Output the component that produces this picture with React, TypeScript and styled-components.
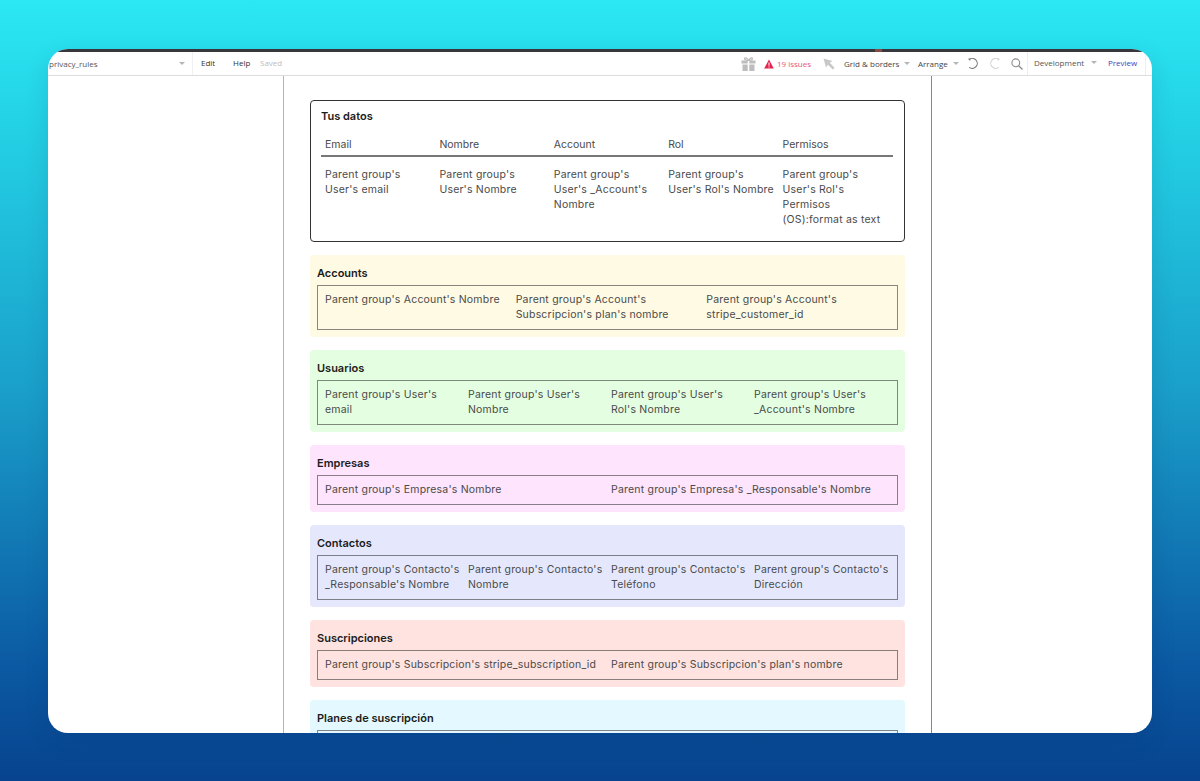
import { FC } from "react";
import styled, { createGlobalStyle } from "styled-components";

const GlobalStyle = createGlobalStyle`
  html, body {
    margin: 0;
    height: 781px;
    overflow: hidden;
    background: linear-gradient(180deg, #2be8f3 0%, #24d3e6 15%, #1a9fca 50%, #0b5aa3 85%, #07438e 100%);
  }
  * {
    box-sizing: border-box;
  }
`;

const tusDatos = [
  { label: "Email", value: "Parent group's User's email" },
  { label: "Nombre", value: "Parent group's User's Nombre" },
  { label: "Account", value: "Parent group's User's _Account's Nombre" },
  { label: "Rol", value: "Parent group's User's Rol's Nombre" },
  { label: "Permisos", value: "Parent group's User's Rol's Permisos (OS):format as text" },
];

const sections = [
  {
    title: "Accounts",
    bg: "#fffae4",
    cells: [
      "Parent group's Account's Nombre",
      "Parent group's Account's Subscripcion's plan's nombre",
      "Parent group's Account's stripe_customer_id",
    ],
  },
  {
    title: "Usuarios",
    bg: "#e4fee1",
    cells: [
      "Parent group's User's email",
      "Parent group's User's Nombre",
      "Parent group's User's Rol's Nombre",
      "Parent group's User's _Account's Nombre",
    ],
  },
  {
    title: "Empresas",
    bg: "#fee4fc",
    cells: ["Parent group's Empresa's Nombre", "Parent group's Empresa's _Responsable's Nombre"],
  },
  {
    title: "Contactos",
    bg: "#e5e8fd",
    cells: [
      "Parent group's Contacto's _Responsable's Nombre",
      "Parent group's Contacto's Nombre",
      "Parent group's Contacto's Teléfono",
      "Parent group's Contacto's Dirección",
    ],
  },
  {
    title: "Suscripciones",
    bg: "#ffe3e1",
    cells: ["Parent group's Subscripcion's stripe_subscription_id", "Parent group's Subscripcion's plan's nombre"],
  },
  {
    title: "Planes de suscripción",
    bg: "#e3f9ff",
    cells: [],
  },
];

const GiftIcon: FC = () => (
  <svg width="15" height="14" viewBox="0 0 15 14">
    <path d="M7.5 3.5C5 3.5 3.5 2.8 3.5 1.6 3.5.4 5.6.2 7.5 3.5ZM7.5 3.5C10 3.5 11.5 2.8 11.5 1.6 11.5.4 9.4.2 7.5 3.5Z" fill="none" stroke="#bbb" strokeWidth="1.2" />
    <path d="M.5 3.5h6.2v3H.5ZM8.3 3.5h6.2v3H8.3ZM1.5 7.4h5.2V14H1.5ZM8.3 7.4h5.2V14H8.3Z" fill="#bdbdbd" />
  </svg>
);

const AlertIcon: FC = () => (
  <svg width="10" height="10" viewBox="0 0 10 10">
    <path d="M5 .5 9.8 9.5H.2Z" fill="#e5234f" />
    <path d="M4.5 3.5h1v3.2h-1ZM4.5 7.4h1v1h-1Z" fill="#fff" />
  </svg>
);

const CursorIcon: FC = () => (
  <svg width="12" height="12" viewBox="0 0 12 12">
    <path d="M.5.5 9.5 3 6.8 4.8 11.5 9.8 9.8 11.5 5 6.8 3 9.5Z" fill="#c8c8c8" />
  </svg>
);

const ArcIcon: FC<{ flip?: boolean; color: string }> = ({ flip, color }) => (
  <svg width="12" height="12" viewBox="0 0 12 12" style={flip ? { transform: "scaleX(-1)" } : undefined}>
    <path d="M2 1.6A5 5 0 1 1 2.2 9.4" fill="none" stroke={color} strokeWidth="1.1" />
    <path d="M1 .8 3.4.6 3.2 3Z" fill={color} />
  </svg>
);

const SearchIcon: FC = () => (
  <svg width="12" height="12" viewBox="0 0 12 12">
    <circle cx="4.8" cy="4.8" r="3.9" fill="none" stroke="#8c8c8c" strokeWidth="1.1" />
    <path d="M7.7 7.7 11.5 11.5" stroke="#8c8c8c" strokeWidth="1.3" />
  </svg>
);

const App: FC = () => (
  <Frame>
    <GlobalStyle />
    <Window>
      <TopStrip />
      <Toolbar>
        <PageName>
          privacy_rules
          <Caret />
        </PageName>
        <MenuGroup>
          <MenuItem>Edit</MenuItem>
          <MenuItem>Help</MenuItem>
          <SavedLabel>Saved</SavedLabel>
        </MenuGroup>
        <ToolsRight>
          <GiftIcon />
          <Issues>
            <AlertIcon />
            19 issues
          </Issues>
          <CursorSlot>
            <CursorIcon />
          </CursorSlot>
          <DropItem $width={74}>
            Grid &amp; borders
            <Caret />
          </DropItem>
          <DropItem $width={49}>
            Arrange
            <Caret />
          </DropItem>
          <IconRow>
            <ArcIcon color="#777" />
            <ArcIcon flip color="#d2d2d2" />
            <SearchIcon />
          </IconRow>
          <EnvSelect>
            Development
            <Caret />
          </EnvSelect>
          <PreviewLink>Preview</PreviewLink>
        </ToolsRight>
      </Toolbar>
      <Canvas>
        <Page>
          <DataCard>
            <CardTitle>Tus datos</CardTitle>
            <DataTable>
              {tusDatos.map((col) => (
                <HeaderCell key={col.label}>{col.label}</HeaderCell>
              ))}
              {tusDatos.map((col) => (
                <ValueCell key={col.label}>{col.value}</ValueCell>
              ))}
            </DataTable>
          </DataCard>
          {sections.map((section) => (
            <Section key={section.title} $bg={section.bg}>
              <SectionTitle>{section.title}</SectionTitle>
              <SectionRow $cols={Math.max(section.cells.length, 1)}>
                {section.cells.map((cell) => (
                  <SectionCell key={cell}>{cell}</SectionCell>
                ))}
              </SectionRow>
            </Section>
          ))}
        </Page>
      </Canvas>
    </Window>
  </Frame>
);

export default App;

const Frame = styled.div`
  height: 781px;
  padding: 49px 48px 48px;
`;

const Window = styled.div`
  height: 684px;
  background: #ffffff;
  border-radius: 20px;
  overflow: hidden;
  display: flex;
  flex-direction: column;
  box-shadow: 0 8px 24px rgba(0, 30, 80, 0.12);
`;

const TopStrip = styled.div`
  height: 3px;
  flex: none;
  background: linear-gradient(90deg, #38383c 827px, #8a4a44 827px, #8a4a44 834px, #38383c 834px);
`;

const Toolbar = styled.div`
  height: 24px;
  flex: none;
  display: flex;
  align-items: center;
  border-bottom: 1px solid #dddddd;
  font-family: "Open Sans", sans-serif;
  font-size: 8px;
  color: #444444;
`;

const Caret = styled.span`
  width: 0;
  height: 0;
  border-left: 3px solid transparent;
  border-right: 3px solid transparent;
  border-top: 3px solid #b5b5b5;
`;

const PageName = styled.div`
  width: 145px;
  height: 100%;
  padding: 0 7px 0 1px;
  display: flex;
  align-items: center;
  justify-content: space-between;
  border-right: 1px solid #f0f0f0;
  color: #555555;
`;

const MenuGroup = styled.div`
  display: flex;
  align-items: center;
  margin-left: 8px;
  margin-top: -2px;
`;

const MenuItem = styled.span`
  width: 32px;
  color: #333333;
`;

const SavedLabel = styled.span`
  margin-left: -5px;
  color: #bdbdbd;
`;

const ToolsRight = styled.div`
  margin-left: auto;
  display: flex;
  align-items: center;
  padding-right: 6px;
  height: 100%;
`;

const Issues = styled.div`
  display: flex;
  align-items: center;
  gap: 3px;
  width: 59px;
  margin-left: 8px;
  color: #e8557a;
`;

const CursorSlot = styled.div`
  width: 21px;
  display: flex;
`;

const DropItem = styled.div<{ $width: number }>`
  width: ${(p) => p.$width}px;
  display: flex;
  align-items: center;
  gap: 5px;
  color: #444444;
`;

const IconRow = styled.div`
  display: flex;
  align-items: center;
  gap: 10px;
  height: 100%;
  padding: 0 4px 0 0;
  border-right: 1px solid #eeeeee;
`;

const EnvSelect = styled.div`
  width: 80px;
  padding-left: 6px;
  display: flex;
  align-items: center;
  gap: 7px;
  color: #555555;
  margin-top: -2px;
`;

const PreviewLink = styled.span`
  width: 38px;
  height: 100%;
  line-height: 21px;
  color: #3f3fc4;
  border-right: 1px solid #eeeeee;
`;

const Canvas = styled.div`
  flex: 1;
  min-height: 0;
`;

const Page = styled.div`
  width: 649px;
  height: 100%;
  margin-left: 235px;
  padding: 24px 26px 0;
  display: flex;
  flex-direction: column;
  gap: 13.5px;
  overflow: hidden;
  border-left: 1px solid #86c3de;
  border-right: 1px solid #4f9ac6;
  font-family: "Inter", sans-serif;
`;

const DataCard = styled.div`
  flex: none;
  height: 141.5px;
  border: 1px solid #333333;
  border-radius: 4px;
  padding: 8px 11px 0 10px;
`;

const CardTitle = styled.div`
  font-size: 11px;
  line-height: 15px;
  font-weight: 600;
  color: #1c1c1c;
`;

const DataTable = styled.div`
  display: grid;
  grid-template-columns: repeat(5, 1fr);
  margin-top: 13px;
`;

const HeaderCell = styled.div`
  height: 20px;
  padding: 0 4px;
  font-size: 10.5px;
  line-height: 15px;
  color: #4a4a4a;
  border-bottom: 2px solid #777777;
`;

const ValueCell = styled.div`
  padding: 10px 2px 0 4px;
  font-size: 10.5px;
  line-height: 15px;
  letter-spacing: 0.2px;
  color: #4a4a4a;
`;

const Section = styled.div<{ $bg: string }>`
  flex: none;
  background: ${(p) => p.$bg};
  border-radius: 4px;
  padding: 11px 7px 6.5px;
`;

const SectionTitle = styled.div`
  font-size: 11px;
  line-height: 15px;
  font-weight: 600;
  color: #1c1c1c;
  margin-bottom: 4px;
`;

const SectionRow = styled.div<{ $cols: number }>`
  display: grid;
  grid-template-columns: repeat(${(p) => p.$cols}, 1fr);
  min-height: 30px;
  border: 1px solid rgba(40, 40, 40, 0.55);
  padding: 6px 0 7px 7px;
`;

const SectionCell = styled.div`
  padding-right: 5px;
  font-size: 10.5px;
  line-height: 15px;
  letter-spacing: 0.2px;
  color: #4a4a4a;
`;
